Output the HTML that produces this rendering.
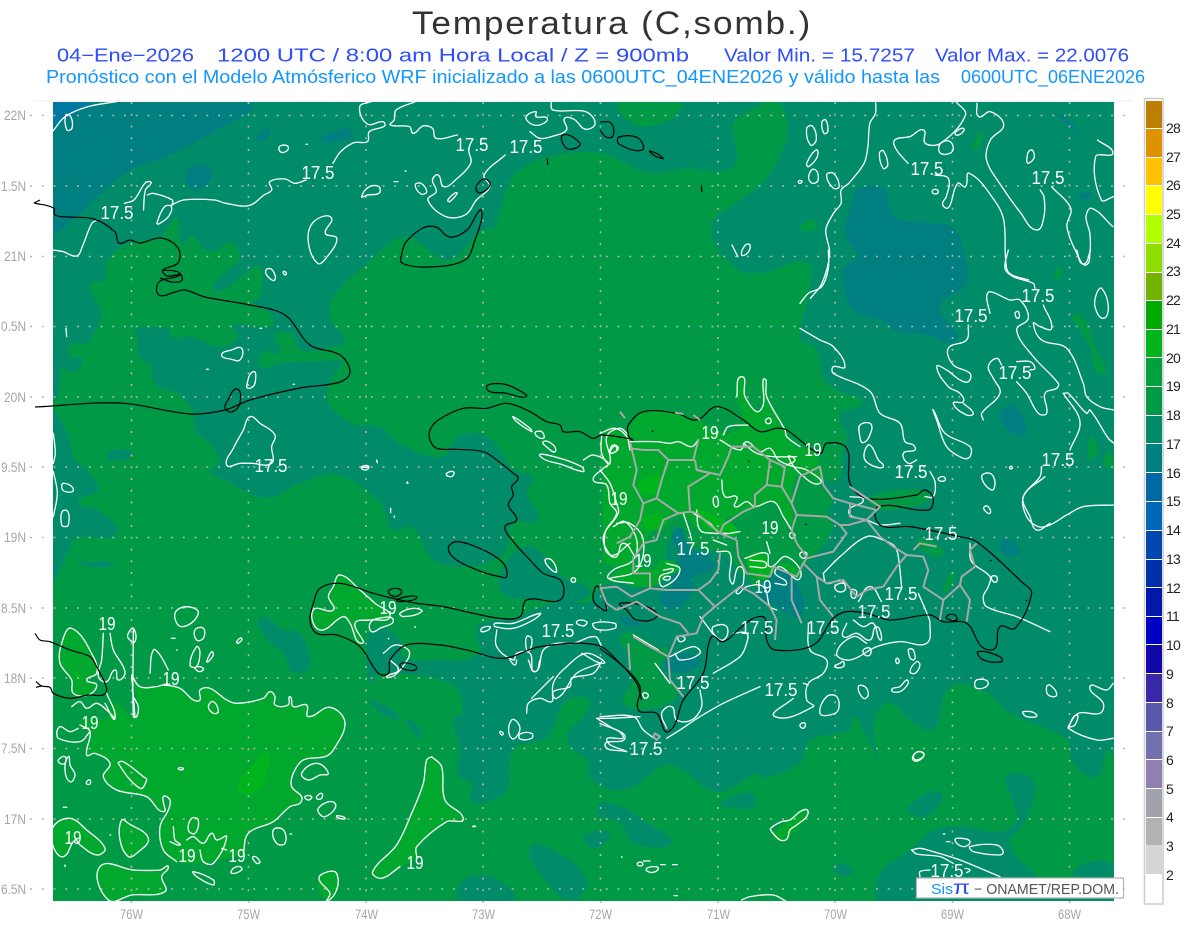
<!DOCTYPE html>
<html><head><meta charset="utf-8"><title>Temperatura</title>
<style>
html,body{margin:0;padding:0;background:#fff;width:1200px;height:927px;overflow:hidden}
svg{display:block;position:absolute;left:0;top:0}
text{font-family:"Liberation Sans",sans-serif;white-space:pre}
path{vector-effect:non-scaling-stroke}
.w path{fill:none;stroke:#fff;stroke-width:1.3;stroke-linejoin:round;stroke-linecap:round}
.k path{fill:none;stroke:#000;stroke-width:1.2;stroke-linejoin:round}
.g path{fill:none;stroke:#a8a8a8;stroke-width:2;stroke-linejoin:round}
.l text{fill:#fff;font-size:18px;text-anchor:middle}
.ax text{fill:#a6a6a6;font-size:14px}
.cb text{fill:#222;font-size:14px;letter-spacing:-.8px}
</style></head><body>
<svg width="1200" height="927" viewBox="0 0 1200 927" xmlns="http://www.w3.org/2000/svg">
<defs><clipPath id="m"><rect x="53" y="102" width="1061" height="799"/></clipPath></defs>
<rect width="1200" height="927" fill="#fff"/>

<text transform="translate(412,34) scale(1.1,1)" font-size="32" fill="#333" textLength="362" lengthAdjust="spacing">Temperatura (C,somb.)</text>
<g font-size="18.5" fill="#2f4dff">
<text x="57" y="61.5" textLength="137" lengthAdjust="spacingAndGlyphs">04−Ene−2026</text>
<text x="217" y="61.5" textLength="472" lengthAdjust="spacingAndGlyphs">1200 UTC / 8:00 am Hora Local / Z = 900mb</text>
<text x="724" y="61.5" textLength="191" lengthAdjust="spacingAndGlyphs">Valor Min. = 15.7257</text>
<text x="935" y="61.5" textLength="194" lengthAdjust="spacingAndGlyphs">Valor Max. = 22.0076</text>
</g>
<g font-size="18" fill="#1296ff">
<text x="46" y="83" textLength="894" lengthAdjust="spacingAndGlyphs">Pronóstico con el Modelo Atmósferico WRF inicializado a las 0600UTC_04ENE2026 y válido hasta las</text>
<text x="961" y="83" textLength="184" lengthAdjust="spacingAndGlyphs">0600UTC_06ENE2026</text>
</g>

<path d="M33 101H1132" stroke="#eee" stroke-width="1"/>

<g clip-path="url(#m)">
<rect x="53" y="102" width="1061" height="799" fill="#009a46"/>
<g fill="#008c68" class="f">
<path d="M53 102 761 102 734 123 736 163 715 172 690 168 650 173 600 153 547 157 513 177 494 227 482 230 448 260 405 237 363 267 333 297 330 317 347 347 327 397 350 423 380 427 397 442 440 457 460 435 490 438 513 470 533 477 527 493 538 520 513 523 507 547 500 557 467 567 433 560 413 527 393 530 380 503 340 475 300 483 267 498 230 483 210 470 220 463 213 447 195 430 193 413 177 392 165 390 152 380 152 368 140 357 132 328 100 327 87 343 70 345 70 357 83 360 70 373 63 367 58 397 53 397Z"/>
<path d="M53 410 57 413 70 440 75 460 87 470 98 490 78 502 97 510 117 527 113 537 73 540 80 560 113 563 97 568 80 563 70 550 63 563 53 580Z"/>
<path d="M761 102 1114 102 1114 755 1107 750 1097 777 1073 763 1067 740 1010 713 983 690 950 687 933 730 910 720 887 703 873 728 878 760 873 750 863 730 853 717 850 730 810 740 800 763 763 778 757 773 717 792 670 765 633 787 610 790 590 777 587 760 570 747 568 733 590 703 567 700 547 737 513 750 507 790 483 803 470 800 473 787 457 773 460 750 453 720 463 710 450 683 380 673 370 682 367 650 367 637 383 627 400 640 403 657 437 660 477 655 477 627 495 620 517 618 533 610 567 600 590 603 600 587 620 583 643 587 650 573 663 563 672 537 690 547 720 553 732 560 737 570 747 577 757 587 767 570 780 567 792 570 807 563 820 550 833 527 827 513 833 498 823 483 838 480 843 450 847 437 840 413 857 408 862 400 837 390 823 377 817 350 800 337 808 297 807 263 761 273 734 267 711 227 740 200 768 177 787 133 780 103Z"/>
<path d="M1007 775 1033 780 1033 803 1017 833 1010 840 1020 860 1065 890 1077 867 1114 865 1114 901 880 901 880 873 910 850 933 830 967 827 1000 832 1017 820 1010 795Z"/>
<path d="M530 848 553 850 587 880 570 900 543 877Z"/>
<path d="M463 880 493 877 513 900 460 900Z"/>
<path d="M600 803 623 807 643 820 672 840 667 847 633 843 620 822 600 817Z"/>
<path d="M720 803 750 793 755 807 727 807Z"/>
<path d="M907 807 940 792 927 817 910 813Z"/>
<path d="M840 863 853 873 835 873Z"/>
<path d="M260 617 283 630 300 633 310 667 293 672 283 653 267 640Z"/>
<path d="M370 700 397 713 397 720 377 710Z"/>
<path d="M407 720 420 730 420 738 413 732Z"/>
<path d="M585 835 610 833 597 848 587 845Z"/>
<path d="M460 890 480 880 480 900 463 900Z"/>
<path d="M107 452 130 450 130 458 110 460Z"/>
<path d="M510 557 533 547 560 575 590 590 580 600 530 600 500 590Z"/>
</g>
<g fill="#009a46" class="f">
<path d="M90 285 105 280 108 260 130 243 160 238 168 227 177 218 182 245 192 236 205 250 218 250 230 242 240 258 227 270 213 288 223 290 240 278 257 266 262 272 260 297 253 303 270 313 273 325 257 327 233 325 237 337 220 347 193 337 173 338 167 328 132 328 130 325 100 327 102 313Z"/>
<path d="M275 335 290 333 300 350 320 350 345 345 360 355 340 360 285 362 270 362 280 350Z"/>
<path d="M260 355 272 352 273 365 262 367Z"/>
<path d="M620 102 680 102 670 120 635 125Z"/>
<path d="M800 270 808 265 808 285 800 295Z"/>
<path d="M1073 315 1087 323 1095 347 1107 373 1097 373 1090 347 1080 330Z"/>
<path d="M1093 437 1097 453 1090 460 1088 447Z"/>
<path d="M1110 453 1114 467 1103 463Z"/>
<path d="M983 133 975 150 973 143Z"/>
<path d="M1059 267 1061 278 1055 277Z"/>
<path d="M810 220 818 227 801 230Z"/>
<path d="M870 497 920 490 930 500 880 510Z"/>
<path d="M953 570 943 593 953 583Z"/>
<path d="M917 540 935 543 943 555 925 552Z"/>
<path d="M620 637 633 633 657 647 667 650 660 670 677 690 670 703 637 710 623 700 633 680 627 653Z"/>
<path d="M770 115 787 135 768 160 760 125Z"/>
</g>
<g fill="#007f80" class="f">
<path d="M53 102 249 103 199 140 165 157 130 170 96 197 76 217 53 230Z"/>
<path d="M856 190 883 188 895 217 952 227 964 253 967 283 940 307 957 340 920 333 900 333 880 320 853 310 843 270 857 257 845 233 853 200Z"/>
<path d="M1000 417 1013 405 1027 433 1013 433Z"/>
<path d="M1059 113 1078 132 1069 128Z"/>
<path d="M1080 195 1091 193 1086 200Z"/>
<path d="M1002 540 1020 550 1008 557Z"/>
<path d="M187 170 212 170 195 190Z"/>
<path d="M256 137 270 130 260 142Z"/>
<path d="M321 137 352 132 325 143Z"/>
<path d="M672 537 680 527 690 547 710 557 713 570 693 577 693 590 673 610 660 597 673 583 667 570 680 557Z"/>
<path d="M757 597 780 570 803 597 800 617 787 613 770 603Z"/>
<path d="M620 617 640 623 637 627 625 625Z"/>
<path d="M670 657 700 657 690 670 667 670Z"/>
</g>
<path d="M53 102 92 102 72 116 53 126Z" fill="#0078a0"/>
<g fill="#00a82e" class="f">
<path d="M602 440 610 427 627 433 630 427 643 412 677 413 697 420 723 433 743 425 737 397 742 377 747 397 760 410 763 380 768 398 787 433 797 447 813 450 820 470 820 483 807 473 800 473 792 487 793 503 793 540 797 540 773 502 760 507 743 513 723 523 737 533 713 533 700 530 683 517 663 518 650 533 643 547 633 560 652 570 662 560 680 567 667 577 650 587 610 578 620 570 603 560Z"/>
<path d="M747 557 767 553 770 567 787 563 800 577 780 567 770 577 755 577Z"/>
<path d="M71 628 93 657 97 673 87 680 97 685 88 695 73 693 72 680 60 663 62 643Z"/>
<path d="M132 675 140 687 157 687 163 685 180 688 193 700 200 700 200 690 210 688 227 700 237 703 263 698 270 692 275 697 275 705 288 705 290 697 293 707 307 705 308 717 330 707 345 723 333 750 325 757 303 760 293 773 292 787 302 797 300 803 290 807 273 822 248 833 243 853 230 857 217 860 197 863 177 862 163 850 160 827 168 810 170 800 163 797 163 812 147 797 117 790 103 777 110 763 95 753 87 755 90 732 80 725 95 717 105 720 115 703 135 717 133 680Z"/>
<path d="M432 757 442 767 445 800 463 819 447 822 417 847 417 857 400 867 382 878 373 872 397 845 412 813 423 783 427 760Z"/>
<path d="M100 867 133 870 160 870 168 867 162 877 165 892 132 895 108 901Z"/>
<path d="M328 872 337 873 337 890 330 901 320 892 319 878Z"/>
<path d="M53 827 70 818 87 830 105 848 97 855 80 845 75 840 63 857 53 847Z"/>
<path d="M122 820 128 823 148 838 137 853 128 857 120 840Z"/>
<path d="M340 576 360 590 375 603 390 617 370 620 355 623 360 643 350 623 343 617 320 630 313 610 333 610 328 597 333 587Z"/>
<path d="M773 836 790 818 803 810 806 816 795 832 785 840 775 840Z"/>
</g>
<g fill="#00b41e" class="f">
<path d="M240 780 260 757 268 753 267 773 260 790 240 793Z"/>
<path d="M647 477 662 477 657 493 637 490Z"/>
<path d="M697 510 717 517 737 533 713 530 700 520Z"/>
<path d="M643 517 667 520 650 530Z"/>
<path d="M748 557 765 560 770 577 755 577Z"/>
<path d="M77 672 80 675 78 678 75 675Z"/>
</g>
</g>

<g stroke="#b5b5b5" stroke-width="1.6" stroke-dasharray="2 9.75" fill="none">
<path d="M30 115.5H1134M30 186H1134M30 256.5H1134M30 326.5H1134M30 397H1134M30 467H1134M30 537.5H1134M30 608H1134M30 678H1134M30 748.5H1134M30 819H1134M30 889H1134"/>
<path d="M131.5 102V906M248.5 102V906M366 102V906M483 102V906M600.5 102V906M718 102V906M835 102V906M952.5 102V906M1069.5 102V906"/>
</g>

<g clip-path="url(#m)" class="w">
<g transform="scale(.3827,.3333)">
<path d="M139 392 170 350 230 320 305 305"/>
<path d="M172 345 185 350 188 385 175 390Z"/>
<path d="M139 750 165 755 200 768 215 740 240 670 255 660"/>
<path d="M375 630 380 570 395 548 380 548 350 600 325 610"/>
<path d="M410 670 430 620 448 620 440 650 415 672Z"/>
<path d="M448 615 480 600 560 600 590 610 650 617 690 585 710 570 705 545 745 537 770 550 800 540"/>
<path d="M870 490 890 455 925 428 960 425 965 395 1005 378 1000 365 960 372 940 320 970 305"/>
<path d="M385 585 400 580 450 600 450 615"/>
<path d="M1085 305 1035 330 1030 360 1020 375 1070 380 1080 400 1105 378 1130 385 1140 415 1195 405"/>
<path d="M1225 455 1230 490 1190 540 1160 560 1145 525 1130 540 1140 575 1118 600 1165 650 1215 645 1245 600 1280 560 1265 525 1320 465"/>
<path d="M1085 555 1100 550 1115 575 1100 582Z"/>
<path d="M1170 600 1190 578 1195 580 1175 605Z"/>
<path d="M945 590 965 560 990 560 990 580 960 585Z"/>
<path d="M730 440 750 437 752 450 735 457Z"/>
<path d="M820 665 865 652 850 700 880 715 855 770 830 790 805 720Z"/>
<path d="M695 810 710 808 718 840 700 830Z"/>
<path d="M740 815 748 818 745 825Z"/>
<path d="M1385 370 1375 350 1400 335 1400 350 1430 355 1410 375Z"/>
<path d="M1440 305 1445 330 1530 335 1555 370 1530 388 1500 358 1475 355 1480 390 1440 410 1410 415 1385 395"/>
<path d="M800 433 803 433M1058 513 1061 513M1030 545 1040 545"/>
</g>
<g transform="translate(600,0) scale(.3827,.3333)">
<path d="M720 305 720 340 705 370 700 440 690 490 650 550 630 570 630 610 610 640 590 690 600 760 580 850 550 895"/>
<path d="M540 385 555 378 565 420 550 435Z"/>
<path d="M580 365 590 360 595 395 585 400Z"/>
<path d="M540 490 565 450 568 470 545 500Z"/>
<path d="M545 530 560 508 570 540 555 550Z"/>
<path d="M592 525 610 520 625 560 610 565Z"/>
<path d="M730 460 740 452 752 495 740 505Z"/>
<path d="M930 305 955 345 890 430 850 430 845 390 810 410 770 420 775 450 805 490"/>
<path d="M890 430 915 425 920 455 890 460Z"/>
<path d="M930 395 950 385 945 400 930 405Z"/>
<path d="M875 525 910 535 905 590 895 610 905 625 915 615 935 550 955 560 965 520 1030 600 1055 660 1060 780 1070 820 1120 840"/>
<path d="M985 310 990 350 1020 335 1055 375 1020 420 1010 480 1050 560 1100 640 1140 690 1160 650 1160 590 1150 570"/>
<path d="M1115 480 1125 450 1135 470 1120 490Z"/>
<path d="M1180 560 1230 625 1220 680 1250 770 1270 795 1280 760 1280 700 1270 650 1285 625 1340 680"/>
<path d="M1300 420 1340 460 1295 470 1310 600 1342 590"/>
<path d="M870 570 882 570 882 580 870 580Z"/>
<path d="M345 735 360 770M370 765 380 735 392 735 385 760Z"/>
<path d="M520 542 528 545 520 550Z"/>
</g>
<g transform="translate(40,200) scale(.3333)">
<path d="M630 650 660 670 705 705 695 740 695 790 635 790 600 790 560 795 580 745 610 690Z"/>
<path d="M545 465 575 450 605 445 600 480 575 478Z"/>
<path d="M620 560 640 515 645 550 630 565Z"/>
<path d="M40 700 46 760 40 790"/>
<path d="M40 815 52 880 40 950"/>
<path d="M70 850 100 870 70 872Z"/>
<path d="M65 975 75 930 85 975Z"/>
<path d="M78 385 80 410"/>
<path d="M660 385 665 385M500 508 505 508M760 553 763 553M1100 848 1103 850M968 802 985 802"/>
</g>
<g transform="translate(800,250) scale(.3333)">
<path d="M0 235 60 270 100 290 135 350 100 350 100 370 180 405 215 430 240 490 300 520 315 575 340 585 345 600 310 610 325 640 350 630"/>
<path d="M625 0 615 55 640 80 700 100 705 115"/>
<path d="M505 225 500 270 445 295 460 345 510 370 505 395 480 390 440 360 410 350 445 410 480 430 490 455 460 460 500 495 520 490 490 460"/>
<path d="M550 510 545 490 600 430 580 385 565 350 590 325 605 345"/>
<path d="M570 190 560 140 570 125 630 150 660 150 685 205 650 240 700 320 775 400 770 415 735 430 740 490 715 490 680 430 650 395"/>
<path d="M650 335 690 335 705 355 690 360"/>
<path d="M645 190 655 185 655 205Z"/>
<path d="M730 165 755 235 720 230 700 220 725 270 800 295 850 400 860 440 900 470 942 480"/>
<path d="M400 480 435 550 510 590 510 620 490 625 440 590 410 510Z"/>
<path d="M890 130 905 115 925 170 910 205 885 170Z"/>
<path d="M790 430 805 430 860 490 870 480 925 565 942 580"/>
<path d="M790 430 840 515 810 600"/>
<path d="M725 650 720 680 670 740 680 800 715 830 750 825 800 795 850 770 942 765"/>
<path d="M545 680 570 670 585 695 575 720Z"/>
<path d="M180 525 210 520 215 540 190 578 178 550Z"/>
<path d="M195 600 210 585 235 630 250 650 225 650 195 630Z"/>
<path d="M390 665 405 695 400 740 375 740"/>
<path d="M415 685 430 680 436 690 420 693Z"/>
<path d="M553 770 565 770 570 790 553 780Z"/>
<path d="M150 740 190 750 150 775 150 795 200 810 240 825 300 820"/>
<path d="M630 650 636 650 636 656 630 656Z"/>
<path d="M85 0 85 55 65 110 25 130 0 160"/>
<path d="M830 0 850 42 872 0"/>
</g>
<g transform="translate(600,370) scale(.3333)">
<path d="M410 80 425 20 435 80 480 122 490 28 498 30 500 80 555 180 560 200 600 230"/>
<path d="M497 150 510 145 512 158 500 160Z"/>
<path d="M370 195 385 170 445 165"/>
<path d="M360 210 420 240 440 215 480 245 510 235 535 270 580 290 620 300 660 340 600 310 565 260 585 270 560 285"/>
<path d="M90 215 170 215 210 220 235 215 275 230 295 210"/>
<path d="M430 220 470 250 520 260 590 260"/>
<path d="M0 190 45 175 80 200 90 240"/>
<path d="M30 240 40 225 55 235 35 250Z"/>
<path d="M0 300 30 340 50 400 55 430 10 500 30 555 50 560 70 520 105 560"/>
<path d="M50 460 90 460 130 510 110 600 30 625"/>
<path d="M340 385 350 380 355 405 345 410Z"/>
<path d="M250 430 270 490 275 510"/>
<path d="M290 420 300 480 340 490 380 490"/>
<path d="M280 430 330 460 360 490 420 485"/>
<path d="M340 510 380 525"/>
<path d="M350 545 390 550 395 640 420 590 430 640 410 670 440 650 490 650 510 710 530 720"/>
<path d="M190 600 220 600 180 620 190 650 240 600 200 580"/>
<path d="M190 625 210 620 205 630Z"/>
<path d="M435 565 500 550 510 590 560 560 600 625 540 590 525 610 560 640 525 640"/>
<path d="M450 570 500 585 450 590"/>
<path d="M500 515 510 550"/>
<path d="M365 330 375 380 410 380 405 410 440 395 465 410 520 395 550 440 580 490"/>
<path d="M570 490 585 495 575 505Z"/>
<path d="M600 550 620 550 610 565Z"/>
<path d="M670 610 720 560 800 500 850 510 885 530 895 560 905 650"/>
<path d="M670 610 680 640 720 630 735 640"/>
<path d="M705 650 730 640 735 660 715 665Z"/>
<path d="M755 660 770 665 760 685Z"/>
<path d="M775 695 810 650 845 695"/>
<path d="M955 670 985 740 990 760 980 820 900 815 830 830 750 870 710 850 760 800 800 820"/>
<path d="M740 760 730 800 770 790 810 810 830 770 840 810 820 760 790 770 760 750"/>
<path d="M790 840 810 835 810 855 795 855Z"/>
<path d="M720 880 730 875 730 890 705 890Z"/>
<path d="M625 760 630 840 680 870 670 910 625 940 620 990 640 1010 525 1040 580 985"/>
<path d="M610 940 625 945"/>
<path d="M400 790 440 790 440 820 420 860 340 910"/>
<path d="M480 950 370 1000 300 1040 240 1080 200 1105"/>
<path d="M300 960 305 1010 275 1050 230 1050 215 1010 185 1030 200 1075"/>
<path d="M0 1040 100 1040 130 1080 170 1110"/>
<path d="M0 1060 70 1100 20 1110 80 1145"/>
<path d="M775 950 795 950 805 975 790 985Z"/>
<path d="M660 1030 680 980 710 980 715 1020 690 1035Z"/>
<path d="M875 960 900 950 920 930 925 940 900 965Z"/>
<path d="M890 865 898 875 890 880Z"/>
<path d="M925 840 940 840 940 870Z"/>
<path d="M930 905 950 875 960 885 945 910Z"/>
<path d="M1130 930 1165 940 1130 955Z"/>
<path d="M1270 1025 1310 1035 1280 1040Z"/>
<path d="M940 1160 955 1145 972 1155 950 1170Z"/>
<path d="M600 1065 615 1060 610 1075Z"/>
<path d="M1175 620 1190 620 1190 635 1180 635Z"/>
<path d="M1110 520 1115 575 1170 620 1165 650 1150 680 1160 710 1250 740 1350 785"/>
<path d="M1335 320 1270 380 1290 440 1310 480 1350 460"/>
<path d="M130 970 145 975 135 985Z"/>
<path d="M210 860 280 830 300 850 240 870 225 850"/>
<path d="M165 880 210 940"/>
<path d="M340 770 380 770 370 810 340 790Z"/>
<path d="M235 800 255 805 240 815Z"/>
<path d="M100 795 175 840"/>
<path d="M300 740 345 800"/>
</g>
<g transform="translate(300,370) scale(.3333)">
<path d="M640 140 690 175 695 185 650 155Z"/>
<path d="M705 190 725 185 730 205Z"/>
<path d="M730 215 760 225 765 245 745 235Z"/>
<path d="M720 258 770 262 845 290 850 305 790 285Z"/>
<path d="M850 270 880 255 925 280 910 295 880 330 920 345 930 400 950 430 915 490 930 555 990 520"/>
<path d="M905 195 905 250 930 280 920 200 960 175 985 195"/>
<path d="M930 245 945 228 950 240 935 250Z"/>
<path d="M940 470 975 455 1010 510 1000 570 940 600 925 625 1000 640"/>
<path d="M545 775 570 770 565 780 545 785Z"/>
<path d="M585 760 640 760 720 730 700 750 640 775 585 770Z"/>
<path d="M880 760 945 760 945 775 890 778Z"/>
<path d="M830 755 860 755 850 768Z"/>
<path d="M590 780 590 830 640 870 650 850 690 850 705 905 730 840 770 820 820 820 885 800 905 830"/>
<path d="M680 800 695 805 690 840 680 840Z"/>
<path d="M735 570 755 570 770 605 755 600Z"/>
<path d="M815 625 825 625 825 635 815 635Z"/>
<path d="M440 310 460 305 458 318 442 318Z"/>
<path d="M185 290 205 288 203 298 187 298Z"/>
<path d="M300 730 340 715 365 725 310 740Z"/>
<path d="M210 760 235 745 280 750 240 775 215 785Z"/>
<path d="M250 850 285 825 325 840 325 865 285 915 260 920 295 900 270 870"/>
<path d="M845 850 910 880 860 850 800 890 760 940 770 985 830 910 900 880"/>
<path d="M695 985 760 920"/>
<path d="M120 615 180 660 225 700 270 740 210 750 165 760 185 820 150 760 130 740 60 780 40 720 100 720 85 680 100 650Z"/>
<path d="M322 336 324 340M272 415 272 428M283 438 283 442M345 770 346 772M265 805 266 807M230 270 232 278"/>
</g>
<g transform="translate(380,660) scale(.3333)">
<path d="M440 160 445 130 480 115 515 125 520 95 570 80 575 55 640 40 665 5"/>
<path d="M395 180 420 205 395 235Z"/>
<path d="M420 222 455 220 455 235 420 237Z"/>
<path d="M360 215 370 220 365 225Z"/>
<path d="M445 0 465 35 480 0"/>
<path d="M390 0 405 15 410 0"/>
<path d="M650 175 690 175 780 170"/>
<path d="M650 175 690 200 735 235 675 255 740 275"/>
<path d="M280 498 286 498"/>
</g>
<g transform="translate(0,600) scale(.3333)">
<path d="M395 225 420 260 470 260 490 255 540 265 580 300 600 300 600 270 630 265 680 300 710 310 790 295 810 275 825 290 825 315 865 315 870 290 880 320 920 315 925 350 990 322 1035 368 1000 450 975 470 910 480 880 520 875 560 905 590 900 610 870 620 820 665 745 700 730 760"/>
<path d="M395 225 400 290 405 350"/>
<path d="M530 785 490 750 480 680 505 630 510 600 490 590 490 635 440 590 350 570 310 530 330 490 285 460 260 465 270 395 240 375"/>
<path d="M215 85 280 170 290 220 260 240 290 255 265 285 220 280 215 240 180 190 185 130Z"/>
<path d="M300 800 400 810 480 810 505 800 485 830 495 875 395 885 325 900Z"/>
<path d="M1295 470 1325 500 1335 600 1390 657 1340 665 1250 740 1250 770"/>
<path d="M1200 800 1145 835 1118 815 1190 735 1235 640 1270 550 1280 480 1295 470"/>
<path d="M985 815 1010 820 1010 870 980 905 990 880 957 835Z"/>
<path d="M160 680 210 655 260 690 315 745 290 765 240 735 225 720 190 770 160 740Z"/>
<path d="M365 660 385 670 445 715 410 760 385 770 360 720Z"/>
<path d="M310 100 305 180 295 230 320 245 345 210 355 240 375 215 340 150 330 100"/>
<path d="M320 280 345 355 315 310"/>
<path d="M385 100 400 85 405 125 385 115Z"/>
<path d="M525 40 560 20 595 40 545 80Z"/>
<path d="M585 90 610 85 610 115 590 120Z"/>
<path d="M570 195 590 140 600 155 590 200Z"/>
<path d="M620 185 635 155 640 165 625 185Z"/>
<path d="M590 200 610 205 600 215 585 205Z"/>
<path d="M450 220 460 150 480 165 505 210"/>
<path d="M215 320 240 305 260 325 290 310 320 330 345 355"/>
<path d="M170 395 180 380 210 395 235 385"/>
<path d="M170 395 175 415 240 425 270 395"/>
<path d="M175 480 195 470 195 490 180 490Z"/>
<path d="M205 470 210 495 225 525 210 545 195 510Z"/>
<path d="M355 490 370 485 430 530 440 540 420 565Z"/>
<path d="M535 505 550 505 545 510Z"/>
<path d="M625 320 640 305 655 335 640 340Z"/>
<path d="M905 520 950 490 985 520 960 525 925 540Z"/>
<path d="M915 590 935 590 925 600Z"/>
<path d="M950 590 965 580 965 595 952 597Z"/>
<path d="M820 690 850 690 855 730 830 730Z"/>
<path d="M955 625 1005 610 975 650Z"/>
<path d="M1010 650 1030 650 1035 657Z"/>
<path d="M710 125 725 115 715 130Z"/>
<path d="M580 815 640 840 640 855 590 830Z"/>
<path d="M575 655 595 660 585 700 565 690Z"/>
<path d="M520 680 525 720 540 735 510 725"/>
<path d="M560 720 580 710 610 730 635 700 650 720 680 710 640 790 610 785 600 750"/>
<path d="M700 805 720 800 725 810 695 820Z"/>
<path d="M760 770 780 785 770 790Z"/>
<path d="M665 745 680 750"/>
<path d="M260 545 270 540 270 552 260 552Z"/>
<path d="M400 85 400 350 410 350 415 320 400 290"/>
<path d="M190 622 200 622M515 115 525 115M530 150 532 150M330 705 332 705M870 702 875 702M1418 680 1426 680M195 795 195 800"/>
</g>
<g transform="translate(600,680) scale(.3333)">
<path d="M512 445 545 425 570 420 600 395 622 390 620 410 590 435 570 450 560 478 540 480 515 455Z"/>
<path d="M938 230 955 215 972 222 960 240 942 242Z"/>
<path d="M935 510 960 505 1000 515 1080 540 1200 590"/>
<path d="M935 510 950 522 1020 530 1060 550"/>
<path d="M1065 480 1085 475 1110 485 1090 500Z"/>
<path d="M1110 500 1190 495 1210 515 1200 525 1120 515Z"/>
<path d="M1040 485 1050 485M1030 462 1035 462"/>
<path d="M140 565 160 560 175 565 160 577 140 573Z"/>
<path d="M112 550 125 547 128 555 115 557Z"/>
<path d="M130 543 150 543M182 554 196 554M218 554 232 554M65 530 66 532M222 647 232 647"/>
<path d="M425 660 450 650 520 645 560 665"/>
<path d="M960 590 960 575 990 570M1095 565 1110 570 1100 578"/>
<path d="M1405 140 1435 100 1500 100 1510 70 1470 20 1520 30 1540 10"/>
<path d="M1405 140 1430 105 1425 135 1405 145 1490 180 1540 175"/>
<path d="M1350 15 1370 45 1345 45 1340 20Z"/>
</g>
</g>

<g class="k">
<path d="M34 203 53.6 208 55 215 69 217 94 219 115 232 119 243 130 240 140 243 161 238 178 248 178 263 163 270 167 276 180 275 159 282 159 295 175 292 185 290 205 297 250 305 285 315 310 345 340 355 350 372 340 382 300 388 250 400 225 410 190 414 120 403 35 407"/>
<path d="M34 203 40 200M162 270 178 272 182 280 172 282 160 278"/>
<path d="M228 400 237 389 240 403 232 412 225 408Z"/>
<path d="M480 210 482 217 475 240 465 260 429 267 402 263 402 253 406 242 423 228 436 227 450 237 467 230Z"/>
<path d="M484 179 490 185 480 193 476 188Z"/>
<path d="M563 135 580 143 576 148 566 148Z"/>
<path d="M547 158 548 165"/>
<path d="M600 122 611 123 613 136 606 137 600 130"/>
<path d="M619 137 638 138 642 150 619 144Z"/>
<path d="M650 151 663 158 655 156Z"/>
<path d="M701 185 702 192"/>
<g transform="translate(300,370) scale(.3333)">
<path d="M997 207 905 195 880 205 840 185 790 185 780 165 740 155 690 125 620 100 560 115 490 115 415 150 390 180 390 210 410 235 470 238 550 245 590 270 640 310 655 325 635 350 640 375 625 405 650 450 615 470 640 515 690 570 730 610 785 635 780 690 680 690 660 740 600 745 520 730 430 710 350 700 300 690 220 670 120 640 60 655 40 700 30 750 50 790 110 795 180 830 235 910 265 910 270 870 320 825 420 825 500 840 610 865 720 830 890 825 960 880 1010 940 1025 990"/>
<path d="M445 535 470 515 550 540 610 580 620 620 600 620 545 605 470 570Z"/>
<path d="M560 55 610 42 680 75 670 82 620 70Z"/>
<path d="M265 665 285 655 305 665 285 680Z"/>
<path d="M290 690 320 680 350 680 340 690 300 695Z"/>
<path d="M300 885 325 880 350 895 320 900Z"/>
<path d="M880 690 895 650 920 720 910 720Z"/>
<path d="M960 700 1040 710 1070 740 1010 750 980 720Z"/>
</g>
<g transform="translate(600,370) scale(.3333)">
<path d="M0 835 70 890 120 950 115 1020 170 1030 205 1085 250 990 310 910 335 800 370 815 420 775 460 745 495 745 500 810 525 840 640 825 700 745 740 725 800 730 870 750 990 735 1030 755 1100 760 1145 830 1185 835 1200 770 1245 775 1295 670 1270 640 1130 515 1080 500 930 470 840 465 835 410 985 420 1000 385 975 360 950 375 800 385 750 340 740 235 680 220 660 250 560 180 530 175 480 185 430 150 350 110 290 150 230 130 130 125 85 165 85 195 95 210 100 210"/>
<path d="M1135 845 1200 860 1205 875 1150 870Z"/>
<path d="M1045 735 1065 735 1070 750 1040 745Z"/>
<path d="M155 182 160 185M445 272 448 275M615 462 620 465M1170 570 1175 573M1278 690 1282 694"/>
</g>
<g transform="translate(0,600) scale(.3333)">
<path d="M105 100 120 120 150 125 210 150 270 170 290 200 320 265 310 285 265 285 210 295 160 280 150 262 125 258 108 245M125 258 108 262"/>
</g>
</g>

<g class="g" transform="translate(600,370) scale(.3333)">
<path d="M90 215 110 300 100 345 130 400 120 450 90 500 50 520"/>
<path d="M90 235 130 240 175 240 205 270 280 270 295 210"/>
<path d="M205 270 185 330 170 385 130 400"/>
<path d="M170 385 235 430 270 425 265 350 330 310 290 300 285 270"/>
<path d="M290 300 360 315 385 260 395 230 460 230 510 270 500 345 465 375 465 410 430 425 370 465 360 490 290 430 270 425"/>
<path d="M235 430 190 450 170 510 130 520 105 560"/>
<path d="M510 270 555 290 545 350 575 400 600 320 660 290 670 345 700 385 750 400 790 410 830 420"/>
<path d="M500 345 545 350"/>
<path d="M575 400 590 435 680 440 720 465 745 465 800 450 840 500 880 530 920 555 890 590 850 650 800 660 770 680 730 630 680 640 650 620 610 580 620 565 700 545 740 490 720 465"/>
<path d="M590 435 575 480 590 520 620 560"/>
<path d="M410 510 360 490"/>
<path d="M410 510 415 560 440 610 510 620 520 590 590 620 610 580"/>
<path d="M360 550 355 600 330 635 295 660 200 660 150 655 150 610 100 610 100 560"/>
<path d="M295 660 345 710 310 740 290 790 230 800 205 860 210 930 250 980"/>
<path d="M345 710 420 650 460 670 510 710 530 750 525 810"/>
<path d="M575 620 575 690 605 760"/>
<path d="M650 620 660 690 700 740"/>
<path d="M50 720 110 695 180 740 240 760 265 790"/>
<path d="M100 800 150 830 205 860"/>
<path d="M85 820 90 900"/>
<path d="M920 555 970 560 985 600 970 650 1030 690 1020 750"/>
<path d="M940 540 960 520 1010 530"/>
<path d="M1030 690 1080 645 1110 690 1100 755"/>
<path d="M1080 645 1085 620 1125 590 1110 540 1130 520"/>
<path d="M0 655 50 650 95 680 150 655"/>
<path d="M60 125 75 145"/>
<path d="M225 128 250 132"/>
<path d="M300 150 280 135"/>
<path d="M800 385 750 350 840 410 800 450"/>
<path d="M750 400 750 440 800 450"/>
<path d="M0 650 20 700 50 720"/>
<path d="M165 1090 180 1100 170 1110 160 1100Z"/>
</g>

<g class="l">
<text x="472" y="151" textLength="33" lengthAdjust="spacingAndGlyphs">17.5</text>
<text x="526" y="153" textLength="33" lengthAdjust="spacingAndGlyphs">17.5</text>
<text x="318" y="179" textLength="33" lengthAdjust="spacingAndGlyphs">17.5</text>
<text x="117" y="219" textLength="33" lengthAdjust="spacingAndGlyphs">17.5</text>
<text x="927" y="175" textLength="33" lengthAdjust="spacingAndGlyphs">17.5</text>
<text x="1048" y="184" textLength="33" lengthAdjust="spacingAndGlyphs">17.5</text>
<text x="1038" y="302" textLength="33" lengthAdjust="spacingAndGlyphs">17.5</text>
<text x="971" y="322" textLength="33" lengthAdjust="spacingAndGlyphs">17.5</text>
<text x="1015" y="379" textLength="33" lengthAdjust="spacingAndGlyphs">17.5</text>
<text x="1058" y="466" textLength="33" lengthAdjust="spacingAndGlyphs">17.5</text>
<text x="911" y="478" textLength="33" lengthAdjust="spacingAndGlyphs">17.5</text>
<text x="271" y="472" textLength="33" lengthAdjust="spacingAndGlyphs">17.5</text>
<text x="941" y="540" textLength="33" lengthAdjust="spacingAndGlyphs">17.5</text>
<text x="693" y="555" textLength="33" lengthAdjust="spacingAndGlyphs">17.5</text>
<text x="901" y="600" textLength="33" lengthAdjust="spacingAndGlyphs">17.5</text>
<text x="874" y="618" textLength="33" lengthAdjust="spacingAndGlyphs">17.5</text>
<text x="823" y="634" textLength="33" lengthAdjust="spacingAndGlyphs">17.5</text>
<text x="757" y="634" textLength="33" lengthAdjust="spacingAndGlyphs">17.5</text>
<text x="558" y="637" textLength="33" lengthAdjust="spacingAndGlyphs">17.5</text>
<text x="693" y="689" textLength="33" lengthAdjust="spacingAndGlyphs">17.5</text>
<text x="781" y="696" textLength="33" lengthAdjust="spacingAndGlyphs">17.5</text>
<text x="646" y="755" textLength="33" lengthAdjust="spacingAndGlyphs">17.5</text>
<text x="947" y="877" textLength="33" lengthAdjust="spacingAndGlyphs">17.5</text>
<text x="710" y="439" textLength="17" lengthAdjust="spacingAndGlyphs">19</text>
<text x="813" y="456" textLength="17" lengthAdjust="spacingAndGlyphs">19</text>
<text x="619" y="505" textLength="17" lengthAdjust="spacingAndGlyphs">19</text>
<text x="770" y="534" textLength="17" lengthAdjust="spacingAndGlyphs">19</text>
<text x="643" y="567" textLength="17" lengthAdjust="spacingAndGlyphs">19</text>
<text x="763" y="593" textLength="17" lengthAdjust="spacingAndGlyphs">19</text>
<text x="388" y="614" textLength="17" lengthAdjust="spacingAndGlyphs">19</text>
<text x="107" y="630" textLength="17" lengthAdjust="spacingAndGlyphs">19</text>
<text x="171" y="685" textLength="17" lengthAdjust="spacingAndGlyphs">19</text>
<text x="90" y="729" textLength="17" lengthAdjust="spacingAndGlyphs">19</text>
<text x="73" y="844" textLength="17" lengthAdjust="spacingAndGlyphs">19</text>
<text x="187" y="862" textLength="17" lengthAdjust="spacingAndGlyphs">19</text>
<text x="237" y="862" textLength="17" lengthAdjust="spacingAndGlyphs">19</text>
<text x="415" y="869" textLength="17" lengthAdjust="spacingAndGlyphs">19</text>
</g>

<g class="ax" text-anchor="end">
<text x="26" y="120" textLength="22" lengthAdjust="spacingAndGlyphs">22N</text>
<text x="26" y="191" textLength="25" lengthAdjust="spacingAndGlyphs">1.5N</text>
<text x="26" y="261" textLength="22" lengthAdjust="spacingAndGlyphs">21N</text>
<text x="26" y="331" textLength="25" lengthAdjust="spacingAndGlyphs">0.5N</text>
<text x="26" y="402" textLength="22" lengthAdjust="spacingAndGlyphs">20N</text>
<text x="26" y="472" textLength="25" lengthAdjust="spacingAndGlyphs">9.5N</text>
<text x="26" y="542" textLength="22" lengthAdjust="spacingAndGlyphs">19N</text>
<text x="26" y="613" textLength="25" lengthAdjust="spacingAndGlyphs">8.5N</text>
<text x="26" y="683" textLength="22" lengthAdjust="spacingAndGlyphs">18N</text>
<text x="26" y="753" textLength="25" lengthAdjust="spacingAndGlyphs">7.5N</text>
<text x="26" y="824" textLength="22" lengthAdjust="spacingAndGlyphs">17N</text>
<text x="26" y="894" textLength="25" lengthAdjust="spacingAndGlyphs">6.5N</text>
</g>
<g class="ax">
<text x="120" y="919" textLength="23" lengthAdjust="spacingAndGlyphs">76W</text>
<text x="237" y="919" textLength="23" lengthAdjust="spacingAndGlyphs">75W</text>
<text x="355" y="919" textLength="23" lengthAdjust="spacingAndGlyphs">74W</text>
<text x="472" y="919" textLength="23" lengthAdjust="spacingAndGlyphs">73W</text>
<text x="589" y="919" textLength="23" lengthAdjust="spacingAndGlyphs">72W</text>
<text x="707" y="919" textLength="23" lengthAdjust="spacingAndGlyphs">71W</text>
<text x="824" y="919" textLength="23" lengthAdjust="spacingAndGlyphs">70W</text>
<text x="941" y="919" textLength="23" lengthAdjust="spacingAndGlyphs">69W</text>
<text x="1058" y="919" textLength="23" lengthAdjust="spacingAndGlyphs">68W</text>
</g>

<rect x="1144.5" y="98.5" width="18.5" height="805.5" fill="#fff" stroke="#ccc" stroke-width="1.5"/>
<g>
<rect x="1146" y="101" width="16" height="27" fill="#bd7f00"/>
<rect x="1146" y="129" width="16" height="28" fill="#dd9200"/>
<rect x="1146" y="158" width="16" height="27" fill="#ffc200"/>
<rect x="1146" y="186" width="16" height="28" fill="#ffff00"/>
<rect x="1146" y="215" width="16" height="28" fill="#b2ff00"/>
<rect x="1146" y="244" width="16" height="28" fill="#8fdc00"/>
<rect x="1146" y="273" width="16" height="27" fill="#72b200"/>
<rect x="1146" y="301" width="16" height="28" fill="#00aa00"/>
<rect x="1146" y="330" width="16" height="27" fill="#00b41a"/>
<rect x="1146" y="358" width="16" height="28" fill="#00a03c"/>
<rect x="1146" y="387" width="16" height="28" fill="#009a46"/>
<rect x="1146" y="416" width="16" height="27" fill="#008c68"/>
<rect x="1146" y="444" width="16" height="28" fill="#007f80"/>
<rect x="1146" y="473" width="16" height="28" fill="#0068a5"/>
<rect x="1146" y="502" width="16" height="28" fill="#0068b5"/>
<rect x="1146" y="531" width="16" height="28" fill="#0048b0"/>
<rect x="1146" y="560" width="16" height="27" fill="#0030aa"/>
<rect x="1146" y="588" width="16" height="28" fill="#0018aa"/>
<rect x="1146" y="617" width="16" height="27" fill="#0000c0"/>
<rect x="1146" y="645" width="16" height="28" fill="#1008a8"/>
<rect x="1146" y="674" width="16" height="28" fill="#3828a8"/>
<rect x="1146" y="703" width="16" height="28" fill="#5858ac"/>
<rect x="1146" y="732" width="16" height="27" fill="#7070b0"/>
<rect x="1146" y="760" width="16" height="28" fill="#9080b0"/>
<rect x="1146" y="789" width="16" height="28" fill="#a2a2ac"/>
<rect x="1146" y="818" width="16" height="27" fill="#b2b2b2"/>
<rect x="1146" y="845" width="16" height="29" fill="#d5d5d5"/>
</g>
<g class="cb">
<text x="1166" y="133">28</text><text x="1166" y="162">27</text><text x="1166" y="190">26</text><text x="1166" y="219">25</text><text x="1166" y="248">24</text><text x="1166" y="276">23</text><text x="1166" y="305">22</text><text x="1166" y="334">21</text><text x="1166" y="363">20</text><text x="1166" y="391">19</text><text x="1166" y="420">18</text><text x="1166" y="449">17</text><text x="1166" y="478">16</text><text x="1166" y="506">15</text><text x="1166" y="535">14</text><text x="1166" y="564">13</text><text x="1166" y="593">12</text><text x="1166" y="621">11</text><text x="1166" y="650">10</text><text x="1166" y="679">9</text><text x="1166" y="708">8</text><text x="1166" y="736">7</text><text x="1166" y="765">6</text><text x="1166" y="794">5</text><text x="1166" y="822">4</text><text x="1166" y="851">3</text><text x="1166" y="880">2</text>
</g>

<rect x="916.5" y="878" width="207" height="20" fill="#fff" stroke="#b5b5b5" stroke-width="1.2"/>
<text x="931" y="894" font-size="15" fill="#1296ff" textLength="22" lengthAdjust="spacingAndGlyphs">Sis</text>
<text x="953" y="894" font-size="19" fill="#2f4dff" textLength="17" lengthAdjust="spacingAndGlyphs">π</text>
<text x="974" y="894" font-size="14.5" fill="#555" textLength="145" lengthAdjust="spacingAndGlyphs">− ONAMET/REP.DOM.</text>
</svg>
<script>
document.querySelectorAll('.w path,.k path,.f path').forEach(function(p){
  var lim=p.closest('.f')?100:320;
  var out=p.getAttribute('d').split(/(?=M)/).map(function(sub){
    var closed=/Z\s*$/.test(sub);
    var n=sub.replace(/[MZ]/g,' ').trim().split(/[\s,]+/).map(Number),pts=[];
    for(var i=0;i+1<n.length;i+=2)pts.push([n[i],n[i+1]]);
    if(pts.length<3)return sub;
    var N=pts.length;
    function tan(i){
      var a=closed?pts[(i-1+N)%N]:pts[Math.max(i-1,0)];
      var b=closed?pts[(i+1)%N]:pts[Math.min(i+1,N-1)];
      var dx=b[0]-a[0],dy=b[1]-a[1],l=Math.hypot(dx,dy)||1;
      return [dx/l,dy/l];
    }
    var d='M'+pts[0][0]+' '+pts[0][1],segs=closed?N:N-1;
    for(var s=0;s<segs;s++){
      var a=pts[s],j=(s+1)%N,b=pts[j],L=Math.hypot(b[0]-a[0],b[1]-a[1]);
      if(L>lim){d+='L'+b[0]+' '+b[1];continue;}
      var t0=tan(s),t1=tan(j),k=L*.33;
      d+='C'+(a[0]+t0[0]*k).toFixed(1)+' '+(a[1]+t0[1]*k).toFixed(1)+' '+(b[0]-t1[0]*k).toFixed(1)+' '+(b[1]-t1[1]*k).toFixed(1)+' '+b[0]+' '+b[1];
    }
    return d+(closed?'Z':'');
  }).join('');
  p.setAttribute('d',out);
});
</script>
</body></html>
